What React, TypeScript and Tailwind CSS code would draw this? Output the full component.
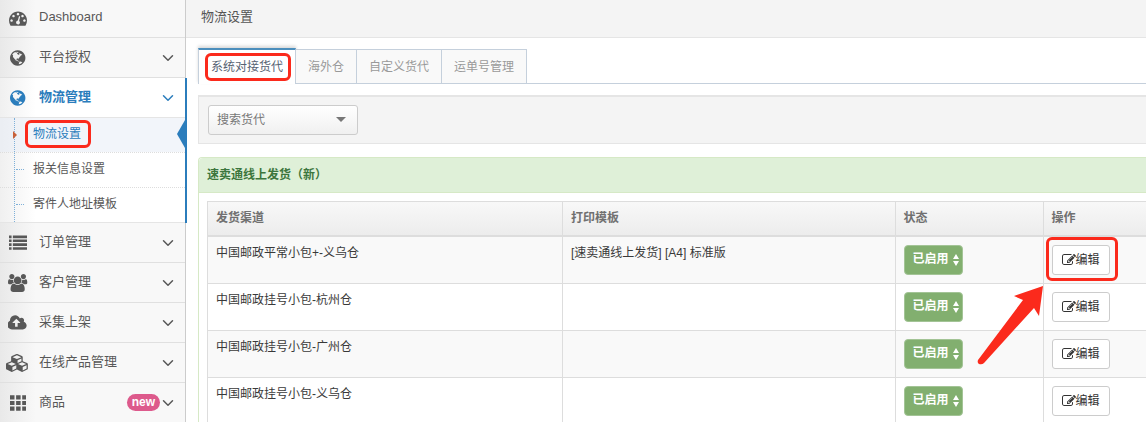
import clsx from 'clsx';
import { ChevronDown } from 'lucide-react';
import { useState, type ReactNode } from 'react';

// Font Awesome 4 glyphs
const paths = {
  dashboard:
    'M384 1152q0-53-37.5-90.5t-90.5-37.5-90.5 37.5-37.5 90.5 37.5 90.5 90.5 37.5 90.5-37.5 37.5-90.5zm192-448q0-53-37.5-90.5t-90.5-37.5-90.5 37.5-37.5 90.5 37.5 90.5 90.5 37.5 90.5-37.5 37.5-90.5zm428 481l101-382q6-26-7.5-48.5t-38.5-29.5-48 6.5-30 39.5l-101 382q-60 5-107 43.5t-63 98.5q-20 77 20 146t117 89 146-20 89-117q16-60-6-117t-72-91zm660-33q0-53-37.5-90.5t-90.5-37.5-90.5 37.5-37.5 90.5 37.5 90.5 90.5 37.5 90.5-37.5 37.5-90.5zm-640-640q0-53-37.5-90.5t-90.5-37.5-90.5 37.5-37.5 90.5 37.5 90.5 90.5 37.5 90.5-37.5 37.5-90.5zm448 192q0-53-37.5-90.5t-90.5-37.5-90.5 37.5-37.5 90.5 37.5 90.5 90.5 37.5 90.5-37.5 37.5-90.5zm320 448q0 261-141 483-19 29-54 29h-1402q-35 0-54-29-141-221-141-483 0-182 71-348t191-286 286-191 348-71 348 71 286 191 191 286 71 348z',
  globe:
    'M768 128q209 0 385.5 103t279.5 279.5 103 385.5-103 385.5-279.5 279.5-385.5 103-385.5-103-279.5-279.5-103-385.5 103-385.5 279.5-279.5 385.5-103zm274 521q-2 1-9.5 9.5t-13.5 9.5q2 0 4.5-5t5-11 3.5-7q6-7 22-15 14-6 52-12 34-8 51 11-2-2 9.5-13t14.5-12q3-2 15-4.5t15-7.5l2-22q-12 1-17.5-7t-6.5-21q0 2-6 8 0-7-4.5-8t-11.5 1-9 1q-10-3-15-7.5t-8-16.5-4-15q-2-5-9.5-11t-9.5-10q-1-2-2.5-5.5t-3-6.5-4-5.5-5.5-2.5-7 5-7.5 10-4.5 5q-3-2-6-1.5t-4.5 1-4.5 3-5 3.5q-3 2-8.5 3t-8.5 2q15-5-1-11-10-4-16-3 9-4 7.5-12t-8.5-14h5q-1-4-8.5-8.5t-17.5-8.5-13-6q-8-5-34-9.5t-33-.5q-5 6-4.5 10.5t4 14 3.5 12.5q1 6-5.5 13t-6.5 12q0 7 14 15.5t10 21.5q-3 8-16 16t-16 12q-5 8-1.5 18.5t10.5 16.5q2 2 1.5 4t-3.5 4.5-5.5 4-6.5 3.5l-3 2q-11 5-20.5-6t-13.5-26q-7-25-16-30-23-8-29 1-5-13-41-26-25-9-58-4 6-1 0-15-7-15-19-12 3-6 4-17.5t1-13.5q3-13 12-23 1-1 7-8.5t9.5-13.5.5-6q35 4 50-11 5-5 11.5-17t10.5-17q9-6 14-5.5t14.5 5.5 14.5 5q14 1 15.5-11t-7.5-20q12 1 3-17-4-7-8-9-12-4-27 5-8 4 2 8-1-1-9.5 10.5t-16.5 17.5-16-5q-1-1-5.5-13.5t-9.5-13.5q-8 0-16 15 3-8-11-15t-24-8q19-12-8-27-7-4-20.5-5t-19.5 4q-5 7-5.5 11.5t5 8 10.5 5.5 11.5 4 8.5 3q14 10 8 14-2 1-8.5 3.5t-11.5 4.5-6 4q-3 4 0 14t-2 14q-5-5-9-17.5t-7-16.5q7 9-25 6l-10-1q-4 0-16 2t-20.5 1-13.5-8q-4-8 0-20 1-4 4-2-4-3-11-9.5t-10-8.5q-46 15-94 41 6 1 12-1 5-2 13-6.5t10-5.5q34-14 42-7l5-5q14 16 20 25-7-4-30-1-20 6-22 12 7 12 5 18-4-3-11.5-10t-14.5-11-15-5q-16 0-22 1-146 80-235 222 7 7 12 8 4 1 5 9t2.5 11 11.5-3q9 8 3 19 1-1 44 27 19 17 21 21 3 11-10 18-1-2-9-9t-9-4q-3 5 .5 18.5t10.5 12.5q-7 0-9.5 16t-2.5 35.5-1 23.5l2 1q-3 12 5.5 34.5t21.5 19.5q-13 3 20 43 6 8 8 9 3 2 12 7.5t15 10 10 10.5q4 5 10 22.5t14 23.5q-2 6 9.5 20t10.5 23q-1 0-2.5 1t-2.5 1q3 7 15.5 14t15.5 13q1 3 2 10t3 11 8 2q2-20-24-62-15-25-17-29-3-5-5.5-15.5t-4.5-14.5q2 0 6 1.5t8.5 3.5 7.5 4 2 3q-3 7 2 17.5t12 18.5 17 19 12 13q6 6 14 19.5t0 13.5q9 0 20 10.5t17 19.5q5 8 8 26t5 24q2 7 8.5 13.5t12.5 9.5l16 8 13 7q5 2 18.5 10.5t21.5 11.5q10 4 16 4t14.5-2.5 13.5-3.5q15-2 29 15t21 21q36 19 55 11-2 1 .5 7.5t8 15.5 9 14.5 5.5 8.5q5 6 18 15t18 15q6-4 7-9-3 8 7 20t18 10q14-3 14-32-31 15-49-18 0-1-2.5-5.5t-4-8.5-2.5-8.5 0-7.5 5-3q9 0 10-3.5t-2-12.5-4-13q-1-8-11-20t-12-15q-5 9-16 8t-16-9q0 1-1.5 5.5t-1.5 6.5q-13 0-15-1 1-3 2.5-17.5t3.5-22.5q1-4 5.5-12t7.5-14.5 4-12.5-4.5-9.5-17.5-2.5q-19 1-26 20-1 3-3 10.5t-5 11.5-9 7q-7 3-24 2t-24-5q-13-8-22.5-29t-9.5-37q0-10 2.5-26.5t3-25-5.5-24.5q3-2 9-9.5t10-10.5q2-1 4.5-1.5t4.5 0 4-1.5 3-6q-1-1-4-3-3-3-4-3 7 3 28.5-1.5t27.5 1.5q15 11 22-2 0-1-2.5-9.5t-.5-13.5q5 27 29 9 3 3 15.5 5t17.5 5q3 2 7 5.5t5.5 4.5 5-.5 8.5-6.5q10 14 12 24 11 40 19 44 7 3 11 2t4.5-9.5 0-14-1.5-12.5l-1-8v-18l-1-8q-15-3-18.5-12t1.5-18.5 15-18.5q1-1 8-3.5t15.5-6.5 12.5-8q21-19 15-35 7 0 11-9-1 0-5-3t-7.5-5-4.5-2q9-5 2-16 5-3 7.5-11t7.5-10q9 12 21 2 7-8 1-16 5-7 20.5-10.5t18.5-9.5q7 2 8-2t1-12 3-12q4-5 15-9t13-5l17-11q3-4 0-4 18 2 31-11 10-11-6-20 3-6-3-9.5t-15-5.5q3-1 11.5-.5t10.5-1.5q15-10-7-16-17-5-43 12zm-163 877q206-36 351-189-3-3-12.5-4.5t-12.5-3.5q-18-7-24-8 1-7-2.5-13t-8-9-12.5-8-11-7q-2-2-7-6t-7-5.5-7.5-4.5-8.5-2-10 1l-3 1q-3 1-5.5 2.5t-5.5 3-4 3 0 2.5q-21-17-36-22-5-1-11-5.5t-10.5-7-10-1.5-11.5 7q-5 5-6 15t-2 13q-7-5 0-17.5t2-18.5q-3-6-10.5-4.5t-12 4.5-11.5 8.5-9 6.5-8.5 5.5-8.5 7.5q-3 4-6 12t-5 11q-2-4-11.5-6.5t-9.5-5.5q2 10 4 35t5 38q7 31-12 48-27 25-29 40-4 22 12 26 0 7-8 20.5t-7 21.5q0 6 2 16z',
  list:
    'M0 160h256v256H0zM384 160h1408v256H384zM0 544h256v256H0zM384 544h1408v256H384zM0 928h256v256H0zM384 928h1408v256H384zM0 1312h256v256H0zM384 1312h1408v256H384z',
  users:
    'M593 896q-162 5-265 128h-134q-82 0-138-40.5t-56-118.5q0-353 124-353 6 0 43.5 21t97.5 42.5 119 21.5q67 0 133-23-5 37-5 66 0 139 81 256zm1071 637q0 120-73 189.5t-194 69.5h-874q-121 0-194-69.5t-73-189.5q0-53 3.5-103.5t14-109 26.5-108.5 43-97.5 62-81 85.5-53.5 111.5-20q10 0 43 21.5t73 48 107 48 135 21.5 135-21.5 107-48 73-48 43-21.5q61 0 111.5 20t85.5 53.5 62 81 43 97.5 26.5 108.5 14 109 3.5 103.5zm-1024-1277q0 106-75 181t-181 75-181-75-75-181 75-181 181-75 181 75 75 181zm704 384q0 159-112.5 271.5t-271.5 112.5-271.5-112.5-112.5-271.5 112.5-271.5 271.5-112.5 271.5 112.5 112.5 271.5zm576 225q0 78-56 118.5t-138 40.5h-134q-103-123-265-128 81-117 81-256 0-29-5-66 66 23 133 23 59 0 119-21.5t97.5-42.5 43.5-21q124 0 124 353zm-128-609q0 106-75 181t-181 75-181-75-75-181 75-181 181-75 181 75 75 181z',
  upload:
    'M1216 864q0-14-9-23l-352-352q-9-9-23-9t-23 9l-351 351q-10 12-10 24 0 14 9 23t23 9h224v352q0 13 9.5 22.5t22.5 9.5h192q13 0 22.5-9.5t9.5-22.5v-352h224q13 0 22.5-9.5t9.5-22.5zm640 288q0 159-112.5 271.5t-271.5 112.5h-1088q-185 0-316.5-131.5t-131.5-316.5q0-130 70-240t188-165q-2-30-2-43 0-212 150-362t362-150q156 0 285.5 87t188.5 231q71-62 166-62 106 0 181 75t75 181q0 76-41 138 130 31 213.5 135.5t83.5 238.5z',
  cubes:
    'M640 1632l384-192v-314l-384 164v342zm-64-454l404-173-404-173-404 173zm1088 454l384-192v-314l-384 164v342zm-64-454l404-173-404-173-404 173zm-448-293l384-165v-266l-384 164v267zm-64-379l441-189-441-189-441 189zm1088 518v416q0 36-19 67t-52 47l-448 224q-25 14-57 14t-57-14l-448-224q-4-2-7-4-2 2-7 4l-448 224q-25 14-57 14t-57-14l-448-224q-33-16-52-47t-19-67v-416q0-38 21.5-70t56.5-48l434-186v-400q0-38 21.5-70t56.5-48l448-192q23-10 50-10t50 10l448 192q35 16 56.5 48t21.5 70v400l434 186q36 16 57 48t21 70z',
  grid:
    'M0 128h448v416H0zM608 128h448v416H608zM1216 128h448v416h-448zM0 688h448v416H0zM608 688h448v416H608zM1216 688h448v416h-448zM0 1248h448v416H0zM608 1248h448v416H608zM1216 1248h448v416h-448z',
  edit:
    'M888 1184l116-116-152-152-116 116v56h96v96h56zm440-720q-16-16-33 1l-350 350q-17 17-1 33t33-1l350-350q17-17 1-33zm80 594v190q0 119-84.5 203.5t-203.5 84.5h-832q-119 0-203.5-84.5t-84.5-203.5v-832q0-119 84.5-203.5t203.5-84.5h832q63 0 117 25 15 7 18 23 3 17-9 29l-49 49q-14 14-32 8-23-6-45-6h-832q-66 0-113 47t-47 113v832q0 66 47 113t113 47h832q66 0 113-47t47-113v-126q0-13 9-22l64-64q15-15 35-7t20 29zm-96-738l288 288-672 672h-288v-288zm444 132l-92 92-288-288 92-92q28-28 68-28t68 28l152 152q28 28 28 68t-28 68z',
};

type IconName = keyof typeof paths;

const boxes: Record<IconName, string> = {
  dashboard: '0 0 1792 1792',
  globe: '0 0 1536 1792',
  list: '0 0 1792 1792',
  users: '0 0 1920 1792',
  upload: '0 0 1920 1792',
  cubes: '0 0 2304 1792',
  grid: '0 0 1664 1792',
  edit: '0 0 1792 1792',
};

function Icon({ name, className }: { name: IconName; className: string }) {
  return (
    <svg viewBox={boxes[name]} className={clsx('shrink-0', className)} fill="currentColor" aria-hidden="true">
      <path d={paths[name]} />
    </svg>
  );
}

function Marked({ children, className }: { children: ReactNode; className: string }) {
  return (
    <span className="relative inline-block">
      {children}
      <span className={clsx('absolute border-3 border-[#fb2a1c] rounded-md pointer-events-none', className)} />
    </span>
  );
}

const menu: { label: string; icon: IconName; children?: string[]; badge?: string; plain?: boolean }[] = [
  { label: 'Dashboard', icon: 'dashboard', plain: true },
  { label: '平台授权', icon: 'globe' },
  { label: '物流管理', icon: 'globe', children: ['物流设置', '报关信息设置', '寄件人地址模板'] },
  { label: '订单管理', icon: 'list' },
  { label: '客户管理', icon: 'users' },
  { label: '采集上架', icon: 'upload' },
  { label: '在线产品管理', icon: 'cubes' },
  { label: '商品', icon: 'grid', badge: 'new' },
];

const tabs = ['系统对接货代', '海外仓', '自定义货代', '运单号管理'];

const channels = [
  { name: '中国邮政平常小包+-义乌仓', template: '[速卖通线上发货] [A4] 标准版' },
  { name: '中国邮政挂号小包-杭州仓', template: '' },
  { name: '中国邮政挂号小包-广州仓', template: '' },
  { name: '中国邮政挂号小包-义乌仓', template: '' },
];

function Sidebar() {
  return (
    <nav className="w-[186px] shrink-0 border-r border-[#ccc] bg-[linear-gradient(to_right,#e9e9e9,#f8f8f8_36px)] text-[13px] leading-5 text-[#585858]">
      <ul>
        {menu.map((item) => (
          <li key={item.label} className={clsx(item.children && 'relative bg-[linear-gradient(to_right,#f0f0f0,#fff_36px)]')}>
            <a
              href="#"
              className={clsx(
                'flex items-center pr-2 border-b',
                item.plain ? 'h-[38px] pb-0.5' : 'h-10',
                item.children ? 'border-[#e5e5e5] font-bold text-[#2b7dbc]' : 'border-[#e0e0e0]'
              )}
            >
              <span className="w-9 mr-[3px] flex justify-center">
                <Icon name={item.icon} className="h-[18px]" />
              </span>
              <span className="pb-0.5">{item.label}</span>
              {item.badge && (
                <span className="ml-auto -mr-px h-[17px] px-[5px] rounded-full bg-[#dd5a8c] text-xs leading-4 font-bold text-white">
                  {item.badge}
                </span>
              )}
              {!item.plain && <ChevronDown size={18} strokeWidth={2} className={clsx(!item.badge && 'ml-auto')} />}
            </a>
            {item.children && (
              <>
                <ul className="relative text-xs leading-5 border-b border-[#e5e5e5]">
                  {item.children.map((child, i) => (
                    <li key={child} className={clsx('relative', i > 0 && 'border-t border-dotted border-[#ddd]')}>
                      <a
                        href="#"
                        className={clsx('flex items-center h-[34px] pb-0.5 pl-[33px]', i === 0 && 'bg-[#e6ebf5]/50 text-[#2b7dbc]')}
                      >
                        {i === 0 ? <Marked className="-left-2 -right-2.5 -inset-y-1">{child}</Marked> : child}
                      </a>
                      {i === 0 ? (
                        <>
                          <span className="absolute left-[13px] top-[13px] z-10 border-y-4 border-y-transparent border-l-4 border-l-[#c86139]" />
                          <span className="absolute right-0 top-0.5 border-y-[14px] border-y-transparent border-r-8 border-r-[#2b7dbc]" />
                        </>
                      ) : (
                        <span className="absolute left-4 top-4 w-2 border-t border-dotted border-[#7fb0d8]" />
                      )}
                    </li>
                  ))}
                  <li aria-hidden="true" className="absolute left-3.5 inset-y-0 border-l border-dotted border-[#7fb0d8]" />
                </ul>
                <span className="absolute -right-0.5 inset-y-0 w-0.5 bg-[#2b7dbc]" />
              </>
            )}
          </li>
        ))}
      </ul>
    </nav>
  );
}

function Arrow() {
  return (
    <svg viewBox="0 0 68 80" className="absolute right-full top-10 mr-2 w-[68px] h-20 max-w-none pointer-events-none" fill="#fb2a1c" aria-hidden="true">
      <path d="M67 1 38 11 47 15 2 75Q1 78 3 79Q6 80 8 78L58 23 63 31Z" />
    </svg>
  );
}

function EditButton() {
  return (
    <button className="flex items-center h-[30px] px-[9px] rounded-[3px] border border-[#ccc] bg-white text-xs text-[#333]">
      <Icon name="edit" className="w-3.5 h-3.5" />
      编辑
    </button>
  );
}

export default function App() {
  const [tab, setTab] = useState(tabs[0]);

  return (
    <div className="flex h-screen overflow-hidden bg-white font-['Liberation_Sans','Noto_Sans_CJK_SC',sans-serif]">
      <Sidebar />

      <main className="flex-1 min-w-0 overflow-hidden">
        <h1 className="h-[38px] pl-[15px] pt-[7px] text-[13px] leading-5 text-[#555] bg-[#f4f4f4] border-b border-[#e5e5e5]">
          物流设置
        </h1>

        <div className="pl-3">
          {/* Tabs */}
          <div role="tablist" className="flex items-end mt-2.5 h-9 border-b border-[#c5d0dc] text-xs">
            {tabs.map((t) => (
              <button
                key={t}
                role="tab"
                aria-selected={t === tab}
                onClick={() => setTab(t)}
                className={clsx(
                  'px-3 border-r border-[#c5d0dc]',
                  t === tab
                    ? 'h-9 -mb-px border-l border-t-2 border-t-[#4c8fbd] bg-white text-[#576373] shadow-[0_-2px_3px_0_rgba(0,0,0,0.15)]'
                    : 'h-[34px] border-t bg-[#f9f9f9] text-[#999]'
                )}
              >
                {t === tabs[0] ? <Marked className="-left-1.5 -right-2 -top-1.5 -bottom-1.5">{t}</Marked> : t}
              </button>
            ))}
          </div>

          {/* Filter */}
          <div className="mt-[11px] px-[9px] py-2 border border-r-0 border-t-2 border-[#e5e5e5] bg-[#f4f4f4]">
            <div className="relative w-[150px]">
              <select
                aria-label="搜索货代"
                className="appearance-none w-full h-[30px] pl-2 rounded-[3px] border border-[#ccc] bg-linear-to-b from-white to-[#f0f0f0] text-xs text-[#777]"
              >
                <option>搜索货代</option>
              </select>
              <span className="absolute right-3 top-3 border-x-5 border-x-transparent border-t-5 border-t-[#777] pointer-events-none" />
            </div>
          </div>

          {/* Channels */}
          <section className="mt-[13px] border border-r-0 border-[#d6e9c6] rounded-tl">
            <h2 className="h-[35px] pl-2 bg-[#dff0d8] border-b border-[#d6e9c6] rounded-tl text-xs leading-[34px] font-bold text-[#3c763d]">
              速卖通线上发货（新）
            </h2>
            <div className="pt-2 pl-2">
              <table className="w-full table-fixed border-collapse text-xs leading-[17px] text-[#393939]">
                <thead>
                  <tr className="h-[34px] bg-linear-to-b from-[#f8f8f8] to-[#ececec] text-left text-[#707070]">
                    <th className="w-[355px] px-2 border border-b-2 border-[#ddd] font-bold">发货渠道</th>
                    <th className="px-2 border border-b-2 border-[#ddd] font-bold">打印模板</th>
                    <th className="w-[148px] px-2 border border-b-2 border-[#ddd] font-bold">状态</th>
                    <th className="w-[103px] px-2 border border-r-0 border-b-2 border-[#ddd] font-bold">操作</th>
                  </tr>
                </thead>
                <tbody>
                  {channels.map((c, i) => (
                    <tr key={c.name} className="align-top odd:bg-[#f9f9f9]">
                      <td className="p-2 border border-[#ddd]">{c.name}</td>
                      <td className="p-2 border border-[#ddd]">{c.template}</td>
                      <td className="p-2 border border-[#ddd]">
                        <button className="flex items-center gap-1 h-[30px] px-[3px] pl-2 rounded border border-[#a3c496] bg-[#82af6f] font-bold text-white">
                          已启用
                          <svg viewBox="0 0 6 12" className="w-1.5 h-3" fill="currentColor" aria-hidden="true">
                            <path d="M0 5 3 0 6 5zM0 7h6L3 12z" />
                          </svg>
                        </button>
                      </td>
                      <td className="p-2 border border-r-0 border-[#ddd]">
                        {i === 0 ? (
                          <div className="relative w-fit">
                            <Marked className="-left-1.5 -right-2 -top-2 -bottom-1.5">
                              <EditButton />
                            </Marked>
                            <Arrow />
                          </div>
                        ) : (
                          <EditButton />
                        )}
                      </td>
                    </tr>
                  ))}
                </tbody>
              </table>
            </div>
          </section>
        </div>
      </main>
    </div>
  );
}
